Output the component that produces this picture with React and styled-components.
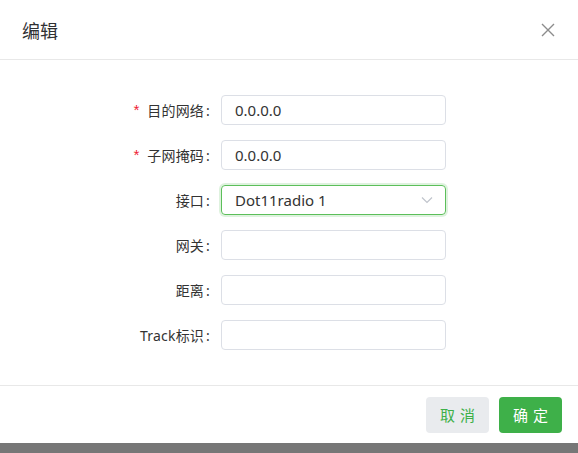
import React from 'react';
import styled, { createGlobalStyle } from 'styled-components';

const GlobalStyle = createGlobalStyle`
    html, body {
        margin: 0;
        padding: 0;
        background: #777777;
        font-family: "Noto Sans", "Noto Sans CJK SC", sans-serif;
    }
`;

const fields = [
    { label: '目的网络', value: '0.0.0.0', required: true },
    { label: '子网掩码', value: '0.0.0.0', required: true },
    { label: '接口', value: 'Dot11radio 1', select: true },
    { label: '网关', value: '' },
    { label: '距离', value: '' },
    { label: 'Track标识', value: '' },
];

const Dialog = styled.div`
    width: 578px;
    height: 443px;
    background: #fff;
    display: flex;
    flex-direction: column;
`;

const Header = styled.div`
    height: 60px;
    box-sizing: border-box;
    padding: 0 22px;
    display: flex;
    align-items: center;
    justify-content: space-between;
    border-bottom: 1px solid #e8e8e8;
`;

const Title = styled.div`
    font-size: 18px;
    color: #303133;
    margin-top: 1px;
`;

const Close = styled.svg`
    width: 14px;
    height: 14px;
    margin-right: 1px;
    margin-top: 1px;
`;

const Body = styled.div`
    flex: 1;
    padding-top: 35px;
    display: flex;
    flex-direction: column;
    gap: 15px;
    border-bottom: 1px solid #e8e8e8;
`;

const Row = styled.div`
    display: flex;
    align-items: center;
    height: 30px;
`;

const Label = styled.div`
    width: 221px;
    box-sizing: border-box;
    padding-right: 11px;
    text-align: right;
    font-size: 14px;
    color: #333;
    white-space: nowrap;
    letter-spacing: 0.2px;
`;

const Colon = styled.span`
    margin-left: 2px;
`;

const Star = styled.span`
    color: #ee2233;
    margin-right: 6px;
    font-size: 15px;
    font-family: "Liberation Mono", monospace;
`;

const Field = styled.div`
    width: 225px;
    height: 30px;
    box-sizing: border-box;
    border: 1px solid ${p => (p.$active ? '#5cbf5a' : '#dcdfe6')};
    box-shadow: ${p => (p.$active ? '0 0 0 2px rgba(92, 191, 90, 0.2)' : 'none')};
    border-radius: 4px;
    padding: 0 12px 0 13px;
    display: flex;
    align-items: center;
    justify-content: space-between;
    font-size: 15px;
    color: #333;
`;

const Footer = styled.div`
    height: 57px;
    padding-right: 16px;
    display: flex;
    align-items: center;
    justify-content: flex-end;
    gap: 10px;
`;

const Button = styled.button`
    width: 63px;
    height: 36px;
    border: none;
    border-radius: 4px;
    font-family: "Noto Sans CJK SC", sans-serif;
    font-size: 15px;
    letter-spacing: 5px;
    padding: 0 0 0 5px;
    background: ${p => (p.$primary ? '#3eb049' : '#e9ebee')};
    color: ${p => (p.$primary ? '#fff' : '#3eb049')};
`;

const Shade = styled.div`
    height: 10px;
    background: #777777;
`;

const App = () => (
    <>
        <GlobalStyle />
        <Dialog>
            <Header>
                <Title>编辑</Title>
                <Close viewBox="0 0 14 14">
                    <path d="M1 1 L13 13 M13 1 L1 13" stroke="#8c8c8c" strokeWidth="1.4" />
                </Close>
            </Header>
            <Body>
                {fields.map(f => (
                    <Row key={f.label}>
                        <Label>
                            {f.required && <Star>*</Star>}
                            {f.label}
                            <Colon>:</Colon>
                        </Label>
                        <Field $active={f.select}>
                            <span>{f.value}</span>
                            {f.select && (
                                <svg width="12" height="8" viewBox="0 0 12 8">
                                    <path d="M1 1.5 L6 6.5 L11 1.5" fill="none" stroke="#c0c4cc" strokeWidth="1.2" />
                                </svg>
                            )}
                        </Field>
                    </Row>
                ))}
            </Body>
            <Footer>
                <Button>取消</Button>
                <Button $primary>确定</Button>
            </Footer>
        </Dialog>
        <Shade />
    </>
);

export default App;
